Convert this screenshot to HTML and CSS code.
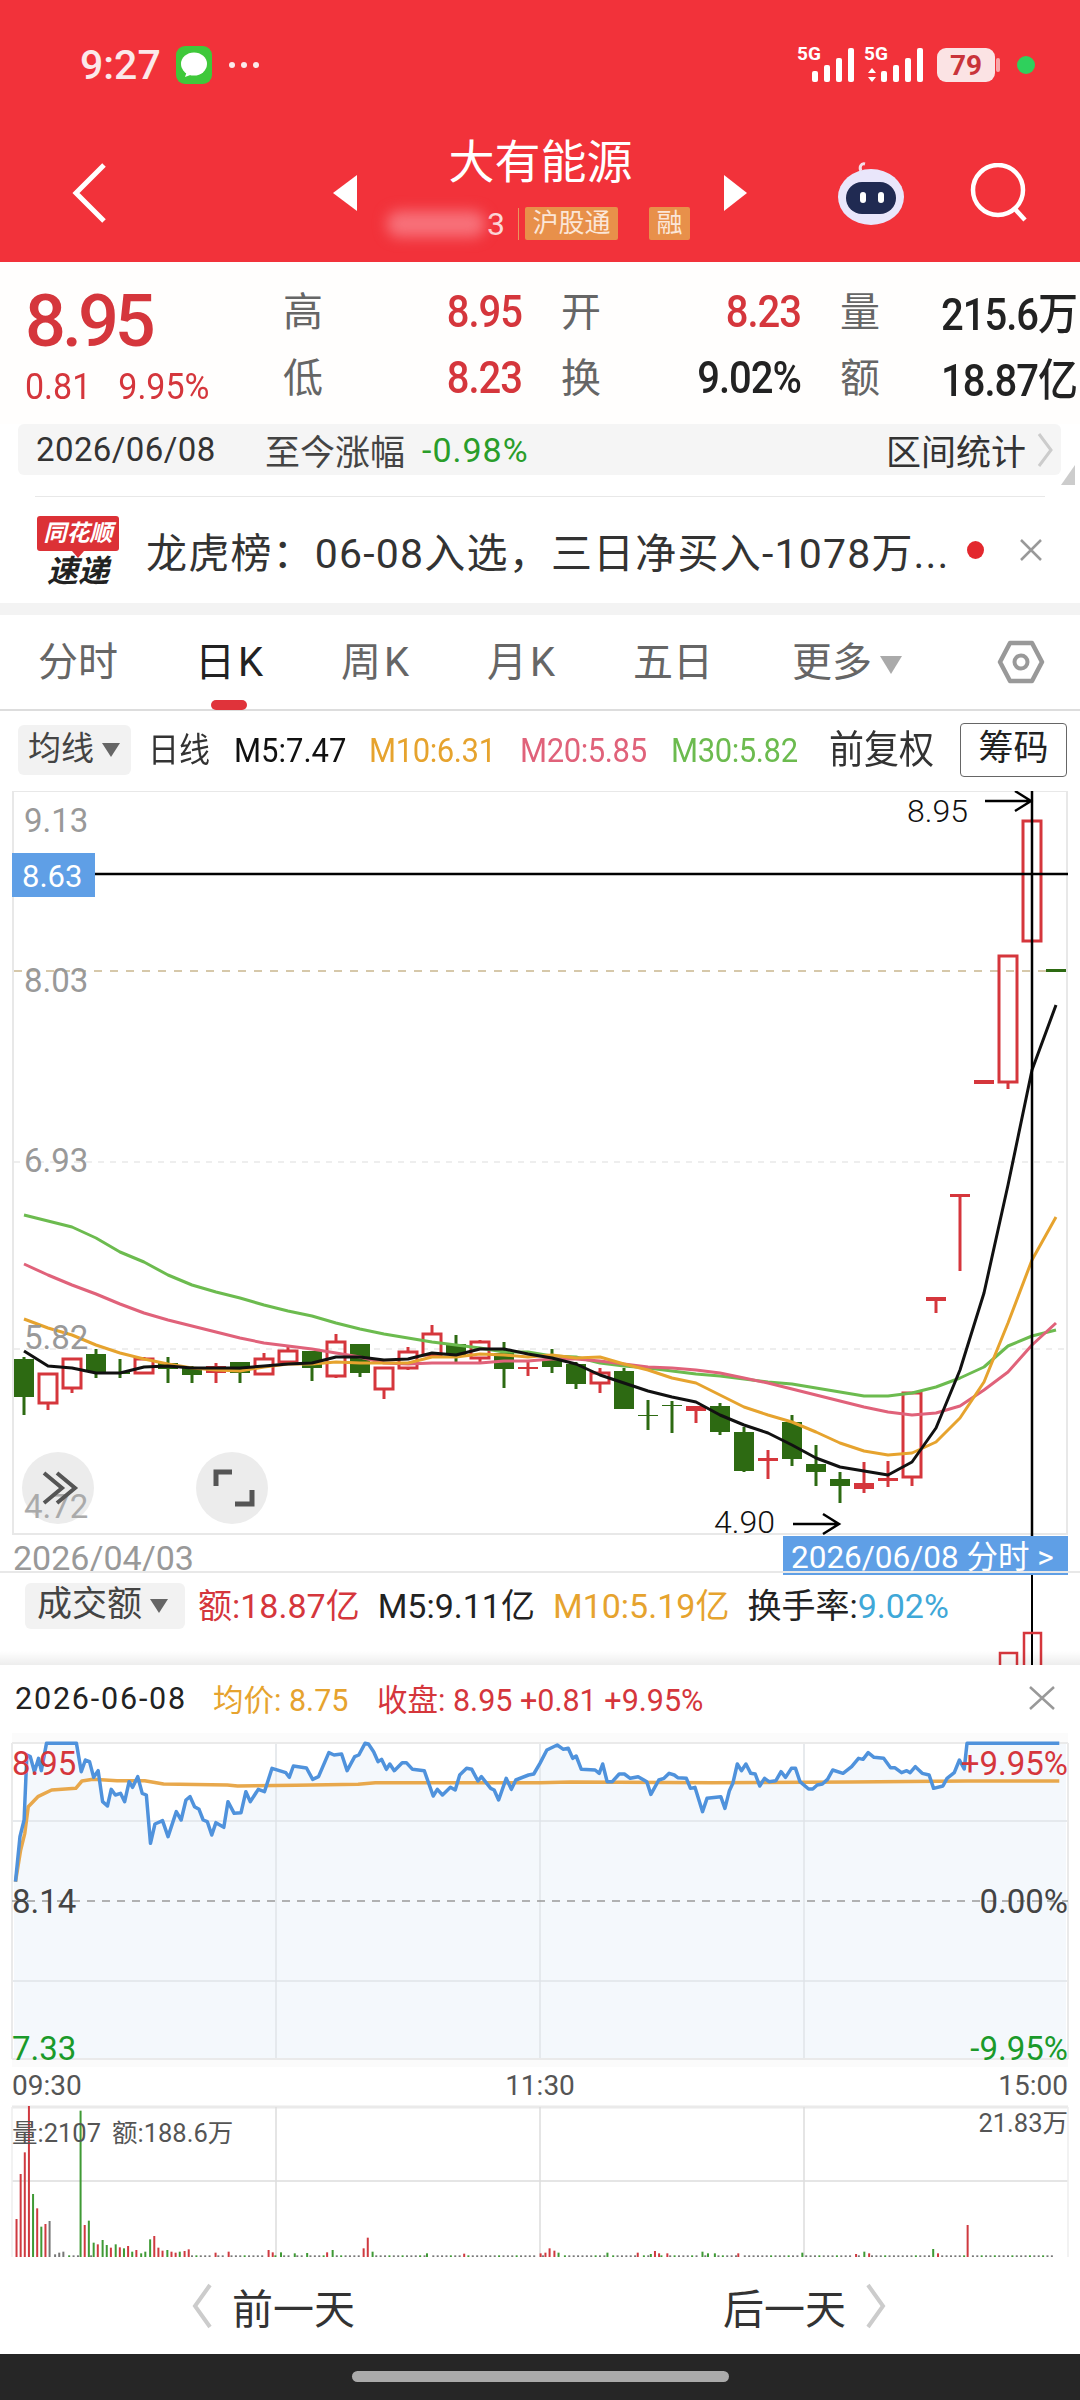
FILE: index.html
```html
<!DOCTYPE html>
<html lang="zh">
<head>
    <meta charset="utf-8">
    <title>大有能源</title>
    <link rel="stylesheet" href="styles.css">
</head>
<body>
<div class="page">
    <header class="topbar">
        <div class="status">
            <div class="status-left">
                <span class="clock">9:27</span>
                <svg class="msg-icon" width="36" height="38" viewBox="0 0 36 38">
                    <rect width="36" height="38" rx="9" fill="#3fc83a"/>
                    <ellipse cx="18" cy="18" rx="13" ry="11.5" fill="#fff"/>
                    <path d="M11 25 L9 31 L17 28 Z" fill="#fff"/>
                </svg>
                <span class="status-dots"><i></i><i></i><i></i></span>
            </div>
            <svg class="status-right" width="245" height="50" viewBox="795 40 245 50">
                <text class="net" x="797" y="60">5G</text>
                <g fill="#fff">
                    <rect x="812" y="71" width="6" height="11" rx="2"/>
                    <rect x="824" y="65" width="6" height="17" rx="2"/>
                    <rect x="836" y="58" width="6" height="24" rx="2"/>
                    <rect x="848" y="48" width="6" height="34" rx="2"/>
                </g>
                <text class="net" x="864" y="60">5G</text>
                <g fill="#fff">
                    <path d="M872 68 l4 5 h-8 z M872 82 l4 -5 h-8 z"/>
                    <rect x="881" y="71" width="6" height="11" rx="2"/>
                    <rect x="893" y="65" width="6" height="17" rx="2"/>
                    <rect x="905" y="58" width="6" height="24" rx="2"/>
                    <rect x="917" y="48" width="6" height="34" rx="2"/>
                </g>
                <rect x="937" y="48" width="58" height="34" rx="9" fill="#fbe3e4"/>
                <rect x="996" y="58" width="4" height="14" rx="2" fill="#f8a5a8"/>
                <text class="batt" x="966" y="75">79</text>
                <circle cx="1026" cy="65" r="9" fill="#2fd05c"/>
            </svg>
        </div>
        <nav class="navrow">
            <svg class="nav-back" width="36" height="62" viewBox="0 0 36 62">
                <path d="M32 3 L4 31 L32 59" fill="none" stroke="#fff" stroke-width="5"/>
            </svg>
            <div class="switcher">
                <span class="tri-left"></span>
                <div class="stock">
                    <div class="stock-name">大有能源</div>
                    <div class="stock-sub">
                        <span class="code-blur"></span>
                        <span class="code-end">3</span>
                        <span class="code-line"></span>
                        <span class="tag">沪股通</span>
                        <span class="tag tag-small">融</span>
                    </div>
                </div>
                <span class="tri-right"></span>
            </div>
            <div class="nav-tools">
                <svg width="68" height="64" viewBox="0 0 68 64">
                    <path d="M24 10 C22 6 24 2 28 3" fill="none" stroke="#f4dfe8" stroke-width="3"/>
                    <ellipse cx="34" cy="36" rx="33" ry="28" fill="#e9e6fb"/>
                    <rect x="9" y="21" width="50" height="32" rx="16" fill="#202a52"/>
                    <rect x="23" y="31" width="6" height="11" rx="3" fill="#fff"/>
                    <rect x="41" y="31" width="6" height="11" rx="3" fill="#fff"/>
                </svg>
                <svg width="58" height="60" viewBox="0 0 58 60">
                    <circle cx="28" cy="27" r="25" fill="none" stroke="#fff" stroke-width="4.5"/>
                    <path d="M44 45 L55 57" stroke="#fff" stroke-width="4.5"/>
                </svg>
            </div>
        </nav>
    </header>

    <section class="quote">
        <div class="price-box">
            <div class="price">8.95</div>
            <div class="change"><span>0.81</span><span>9.95%</span></div>
        </div>
        <div class="stats">
            <div class="stat"><span class="stat-key">高</span><span class="stat-val up">8.95</span></div>
            <div class="stat"><span class="stat-key">开</span><span class="stat-val up">8.23</span></div>
            <div class="stat"><span class="stat-key">量</span><span class="stat-val">215.6万</span></div>
            <div class="stat"><span class="stat-key">低</span><span class="stat-val up">8.23</span></div>
            <div class="stat"><span class="stat-key">换</span><span class="stat-val">9.02%</span></div>
            <div class="stat"><span class="stat-key">额</span><span class="stat-val">18.87亿</span></div>
        </div>
    </section>

    <div class="datebar">
        <span class="datebar-date">2026/06/08</span>
        <span class="datebar-label">至今涨幅</span>
        <span class="datebar-pct">-0.98%</span>
        <span class="datebar-link">区间统计</span>
        <svg width="16" height="34" viewBox="0 0 16 34">
            <path d="M2 1 L14 17 L2 33" fill="none" stroke="#ccc" stroke-width="3"/>
        </svg>
        <span class="datebar-fold"></span>
    </div>

    <div class="news">
        <div class="news-logo">
            <div class="logo-bubble">同花顺</div>
            <div class="logo-word">速递</div>
        </div>
        <div class="news-text">龙虎榜：06-08入选，三日净买入-1078万...</div>
        <span class="news-dot"></span>
        <svg class="news-close" width="24" height="22" viewBox="0 0 24 22">
            <path d="M2 1 L22 21 M22 1 L2 21" stroke="#999" stroke-width="2.5"/>
        </svg>
    </div>

    <div class="tabs">
        <span class="tab tab-a">分时</span>
        <span class="tab tab-b tab-k tab-active">日K</span>
        <span class="tab tab-c tab-k">周K</span>
        <span class="tab tab-d tab-k">月K</span>
        <span class="tab tab-e">五日</span>
        <span class="tab tab-f">更多<i class="tab-arrow"></i></span>
        <svg class="tab-hex" width="48" height="44" viewBox="0 0 48 44">
            <path d="M13 3 H35 L45 22 L35 41 H13 L3 22 Z" fill="none" stroke="#999" stroke-width="4.5" stroke-linejoin="round"/>
            <circle cx="24" cy="22" r="6.5" fill="none" stroke="#999" stroke-width="4"/>
        </svg>
    </div>

    <div class="marow">
        <span class="drop">均线<i class="drop-arrow"></i></span>
        <span class="ma ma-day">日线</span>
        <span class="ma ma5">M5:7.47</span>
        <span class="ma ma10">M10:6.31</span>
        <span class="ma ma20">M20:5.85</span>
        <span class="ma ma30">M30:5.82</span>
        <span class="ma ma-adj">前复权</span>
        <span class="chip">筹码</span>
    </div>

    <svg id="kline" class="kline" width="1080" height="792" viewBox="0 791 1080 792">
        <rect x="13" y="791" width="1054" height="743" fill="none" stroke="#e8e8e8" stroke-width="2"/>
        <path d="M14 971 H1066" stroke="#c9b68f" stroke-width="1.5" stroke-dasharray="8 8"/>
        <path d="M14 1162 H1066 M14 1349 H1066" stroke="#ddd" stroke-width="1" stroke-dasharray="6 6"/>
        <g id="kline-marks"></g>
        <path d="M1032 791 V1571" stroke="#000" stroke-width="2.5"/>
        <path d="M13 874 H1068" stroke="#000" stroke-width="2.5"/>
        <text class="axis" x="24" y="832">9.13</text>
        <text class="axis" x="24" y="992">8.03</text>
        <text class="axis" x="24" y="1172">6.93</text>
        <text class="axis" x="24" y="1349">5.82</text>
        <rect x="12" y="853" width="83" height="44" fill="#5f9fe6"/>
        <text class="axis-on" x="22" y="887">8.63</text>
        <text class="mark" x="907" y="822">8.95</text>
        <path d="M985 801 H1031 M1015 791 L1031 801 L1015 811" fill="none" stroke="#000" stroke-width="2.5"/>
        <text class="mark" x="714" y="1533">4.90</text>
        <path d="M793 1524 H839 M823 1514 L839 1524 L823 1534" fill="none" stroke="#000" stroke-width="2.5"/>
        <circle cx="58" cy="1488" r="36" fill="#ececec"/>
        <text class="axis axis-dim" x="24" y="1518">4.72</text>
        <path d="M44 1473 L62 1488 L44 1503 M57 1473 L75 1488 L57 1503" fill="none" stroke="#555" stroke-width="4"/>
        <circle cx="232" cy="1488" r="36" fill="#ececec"/>
        <path d="M216 1486 V1472 H232 M252 1490 V1504 H235" fill="none" stroke="#555" stroke-width="5"/>
        <text class="axis date-left" x="13" y="1570">2026/04/03</text>
        <rect x="783" y="1536" width="285" height="39" fill="#5f9fe6"/>
        <text class="date-on" x="791" y="1568">2026/06/08 分时 &gt;</text>
    </svg>

    <section class="volume">
        <svg class="volume-bars" width="1080" height="94" viewBox="0 1571 1080 94">
            <path d="M1032 1575 V1665" stroke="#000" stroke-width="2"/>
            <rect x="1000" y="1653" width="17" height="20" fill="none" stroke="#d5363c" stroke-width="2.5"/>
            <rect x="1024" y="1633" width="17" height="40" fill="none" stroke="#d5363c" stroke-width="2.5"/>
        </svg>
        <div class="volume-row">
            <span class="drop drop-wide">成交额<i class="drop-arrow"></i></span>
            <span class="vol-item up">额:18.87亿</span>
            <span class="vol-item">M5:9.11亿</span>
            <span class="vol-item vol-gold">M10:5.19亿</span>
            <span class="vol-item">换手率:<b class="vol-blue">9.02%</b></span>
        </div>
    </section>

    <section class="panel">
        <div class="panel-head">
            <span class="panel-date">2026-06-08</span>
            <span class="panel-avg">均价: 8.75</span>
            <span class="panel-close">收盘: 8.95 +0.81 +9.95%</span>
            <svg class="panel-x" width="28" height="24" viewBox="0 0 28 24">
                <path d="M2 1 L26 23 M26 1 L2 23" stroke="#999" stroke-width="2.5"/>
            </svg>
        </div>
        <svg id="intraday" class="intraday" width="1080" height="334" viewBox="0 1733 1080 334">
            <rect x="12" y="1733" width="1056" height="334" fill="#fbfbfb"/>
            <rect x="12" y="1743" width="1056" height="316" fill="#fff"/>
            <g id="intraday-fill"></g>
            <path d="M12 1821 H1068 M12 1981 H1068 M276 1743 V2059 M540 1743 V2059 M804 1743 V2059" stroke="#dfe3e8" stroke-width="1.5"/>
            <path d="M12 1743 H1068 M12 2059 H1068 M12 1743 V2059 M1068 1743 V2059" stroke="#eaeaea" stroke-width="2"/>
            <path d="M12 1901 H1068" stroke="#999" stroke-width="1.5" stroke-dasharray="8 7"/>
            <g id="intraday-lines"></g>
            <text class="axis up-fill" x="12" y="1775">8.95</text>
            <text class="axis dark-fill" x="12" y="1913">8.14</text>
            <text class="axis green-fill" x="12" y="2060">7.33</text>
            <text class="axis up-fill" x="1068" y="1775" text-anchor="end">+9.95%</text>
            <text class="axis dark-fill" x="1068" y="1913" text-anchor="end">0.00%</text>
            <text class="axis green-fill" x="1068" y="2060" text-anchor="end">-9.95%</text>
        </svg>
        <div class="times"><span>09:30</span><span>11:30</span><span>15:00</span></div>
        <svg id="ticks" class="ticks" width="1080" height="162" viewBox="0 2103 1080 162">
            <path d="M12 2107 H1068" stroke="#eaeaea" stroke-width="3"/>
            <path d="M12 2181 H1068 M276 2107 V2257 M540 2107 V2257 M804 2107 V2257" stroke="#ddd" stroke-width="1.5"/>
            <path d="M12 2107 V2257 M1068 2107 V2257" stroke="#eee" stroke-width="1.5"/>
            <g id="tick-bars"></g>
            <text class="tick-label" x="12" y="2142">量:2107</text>
            <text class="tick-label" x="112" y="2142">额:188.6万</text>
            <text class="tick-label" x="1068" y="2132" text-anchor="end">21.83万</text>
        </svg>
        <div class="daynav">
            <svg width="20" height="46" viewBox="0 0 20 46">
                <path d="M18 2 L3 23 L18 44" fill="none" stroke="#ccc" stroke-width="4"/>
            </svg>
            <span class="daynav-prev">前一天</span>
            <span class="daynav-next">后一天</span>
            <svg width="20" height="46" viewBox="0 0 20 46">
                <path d="M2 2 L17 23 L2 44" fill="none" stroke="#ccc" stroke-width="4"/>
            </svg>
        </div>
    </section>

    <div class="homebar"><span class="homebar-pill"></span></div>
</div>
<script src="charts.js"></script>
</body>
</html>
```
FILE: styles.css
```css
* {
    box-sizing: border-box;
}
body {
    margin: 0;
    background: #fff;
    font-family: Roboto, "Noto Sans CJK SC", sans-serif;
    color: #333;
}
svg {
    display: block;
}
.page {
    width: 1080px;
    height: 2400px;
    overflow: hidden;
}
.up {
    color: #d5363c;
}

/* top bar */
.topbar {
    height: 262px;
    background: #f2323a;
    color: #fff;
}
.status {
    height: 130px;
    padding: 0 40px 0 80px;
    display: flex;
    align-items: center;
    justify-content: space-between;
}
.status-left {
    display: flex;
    align-items: center;
}
.clock {
    font-size: 41px;
    font-weight: 500;
    width: 96px;
    color: #fbe9ea;
}
.status-dots {
    display: flex;
    gap: 6px;
    margin-left: 17px;
}
.status-dots i {
    width: 6px;
    height: 6px;
    border-radius: 50%;
    background: #fbe9ea;
}
.net {
    font-size: 19px;
    font-weight: 700;
    fill: #fff;
}
.batt {
    font-size: 28px;
    font-weight: 700;
    fill: #c9333a;
    text-anchor: middle;
}
.navrow {
    height: 132px;
    padding: 0 72px;
    display: grid;
    grid-template-columns: 1fr auto 1fr;
    align-items: center;
}
.nav-back {
    margin-top: -6px;
}
.switcher {
    display: flex;
    align-items: center;
    width: 415px;
    justify-content: space-between;
}
.tri-left,
.tri-right {
    width: 0;
    height: 0;
    border-top: 18px solid transparent;
    border-bottom: 18px solid transparent;
    margin-top: -6px;
}
.tri-left {
    border-right: 24px solid #fff;
}
.tri-right {
    border-left: 23px solid #fff;
}
.stock {
    display: flex;
    flex-direction: column;
    align-items: center;
    margin-top: -15px;
}
.stock-name {
    font-size: 46px;
    line-height: 60px;
    margin-top: -5px;
}
.stock-sub {
    display: flex;
    align-items: center;
    height: 33px;
    margin: 15px 4px 0 0;
}
.code-blur {
    width: 98px;
    height: 26px;
    background: #f7717a;
    border-radius: 12px;
    filter: blur(7px);
}
.code-end {
    font-size: 32px;
    margin-left: 2px;
    color: #fbd9db;
}
.code-line {
    width: 1px;
    height: 32px;
    background: #e9955c;
    margin: 0 6px 0 13px;
}
.tag {
    height: 33px;
    padding: 0 6px;
    background: #e8904a;
    color: #fbe6d8;
    font-size: 26px;
    line-height: 33px;
    border-radius: 2px;
    width: 93px;
    text-align: center;
    white-space: nowrap;
}
.tag-small {
    width: 41px;
    padding: 0;
    margin-left: 31px;
}
.nav-tools {
    display: flex;
    justify-content: flex-end;
    align-items: center;
    gap: 65px;
    margin: -6px -20px 0 0;
}

/* quote */
.quote {
    height: 162px;
    display: flex;
    background: #fffefd;
}
.price-box {
    width: 283px;
    padding: 18px 0 0 25px;
    color: #d5363c;
}
.price {
    font-size: 72px;
    font-weight: 500;
    line-height: 84px;
    letter-spacing: -4px;
}
.change {
    display: flex;
    gap: 27px;
    font-size: 34px;
    line-height: 44px;
    transform: scaleY(1.1);
}
.stats {
    padding-top: 16px;
    display: grid;
    grid-template-columns: 239px 240px 237px;
    grid-auto-rows: 66px;
    column-gap: 39px;
}
.stat {
    display: flex;
    justify-content: space-between;
    align-items: center;
    font-size: 40px;
    white-space: nowrap;
}
.stat-val {
    font-weight: 500;
    letter-spacing: -1px;
    color: #222;
    transform: scaleY(1.12);
}
.stat-val.up {
    color: #d5363c;
}
.stat-key {
    color: #666;
    margin-top: -4px;
}

/* date strip */
.datebar {
    position: relative;
    height: 51px;
    margin: 0 19px 0 18px;
    padding: 0 8px 0 18px;
    background: #f5f5f5;
    border-radius: 6px;
    display: flex;
    align-items: center;
}
.datebar-date {
    font-size: 33px;
    letter-spacing: .4px;
    width: 229px;
}
.datebar-label {
    font-size: 35px;
    color: #444;
    width: 157px;
    white-space: nowrap;
}
.datebar-pct {
    font-size: 34px;
    letter-spacing: 1px;
    color: #2a9d2a;
}
.datebar-link {
    font-size: 35px;
    margin-left: auto;
    margin-right: 11px;
}
.datebar-fold {
    position: absolute;
    right: -14px;
    bottom: -10px;
    border-left: 14px solid transparent;
    border-bottom: 20px solid #ccc;
}

/* news row */
.news {
    height: 119px;
    margin-top: 21px;
    position: relative;
    display: flex;
    align-items: center;
    padding-left: 37px;
    border-bottom: 12px solid #f3f3f3;
}
.news::before {
    content: "";
    position: absolute;
    top: 0;
    left: 35px;
    width: 1010px;
    height: 1px;
    background: #e8e8e8;
}
.news-logo {
    width: 109px;
    margin-top: 6px;
}
.logo-bubble {
    position: relative;
    width: 82px;
    height: 35px;
    background: #dc3136;
    color: #fff;
    border-radius: 3px;
    font-size: 23px;
    font-weight: 700;
    font-style: italic;
    line-height: 35px;
    text-align: center;
    white-space: nowrap;
}
.logo-bubble::after {
    content: "";
    position: absolute;
    left: 35px;
    top: 35px;
    border-left: 6px solid transparent;
    border-right: 6px solid transparent;
    border-top: 7px solid #dc3136;
}
.logo-word {
    width: 82px;
    margin-top: 4px;
    font-size: 31px;
    font-weight: 700;
    font-style: italic;
    line-height: 34px;
    text-align: center;
    color: #222;
}
.news-text {
    font-size: 41px;
    letter-spacing: 1.2px;
    white-space: nowrap;
    width: 821px;
    color: #333;
}
.news-dot {
    width: 17px;
    height: 18px;
    border-radius: 50%;
    background: #e3282e;
}
.news-close {
    margin-left: 35px;
}

/* tabs */
.tabs {
    position: relative;
    height: 96px;
    border-bottom: 2px solid #ddd;
    font-size: 40px;
    color: #666;
}
.tab {
    position: absolute;
    top: 20px;
    line-height: 56px;
    white-space: nowrap;
}
.tab-k {
    letter-spacing: 3px;
}
.tab-a { left: 38px; }
.tab-b { left: 195px; }
.tab-c { left: 341px; }
.tab-d { left: 487px; }
.tab-e { left: 633px; }
.tab-f { left: 792px; }
.tab-active {
    color: #222;
}
.tab-active::after {
    content: "";
    position: absolute;
    left: 16px;
    top: 65px;
    width: 36px;
    height: 10px;
    border-radius: 5px;
    background: #e0333a;
}
.tab-arrow {
    display: inline-block;
    margin-left: 8px;
    border-left: 11px solid transparent;
    border-right: 11px solid transparent;
    border-top: 18px solid #aaa;
    vertical-align: 2px;
}
.tab-hex {
    position: absolute;
    left: 997px;
    top: 25px;
}

/* moving averages */
.marow {
    position: relative;
    height: 80px;
    font-size: 31px;
}
.drop {
    position: absolute;
    left: 18px;
    top: 14px;
    width: 113px;
    height: 50px;
    padding-left: 10px;
    background: #f2f2f2;
    border-radius: 6px;
    line-height: 48px;
    font-size: 33px;
    white-space: nowrap;
    color: #444;
}
.drop-arrow {
    display: inline-block;
    margin-left: 8px;
    border-left: 9px solid transparent;
    border-right: 9px solid transparent;
    border-top: 14px solid #666;
    vertical-align: 3px;
}
.ma {
    position: absolute;
    top: 18px;
    line-height: 44px;
    white-space: nowrap;
    transform: scaleY(1.1);
}
.ma-day { left: 148px; color: #333; }
.ma5 { left: 234px; color: #111; }
.ma10 { left: 369px; color: #e6a32e; letter-spacing: -.4px; }
.ma20 { left: 520px; color: #e0627a; letter-spacing: -.4px; }
.ma30 { left: 671px; color: #6cbb4f; letter-spacing: -.4px; }
.ma-adj { left: 829px; font-size: 35px; color: #333; }
.chip {
    position: absolute;
    left: 960px;
    top: 12px;
    width: 107px;
    height: 54px;
    border: 1.5px solid #666;
    border-radius: 4px;
    text-align: center;
    line-height: 50px;
    font-size: 35px;
    color: #222;
}

/* k line */
.axis {
    font-size: 33px;
    fill: #999;
}
.axis-dim {
    fill: #aaa;
}
.axis-on {
    font-size: 31px;
    fill: #fff;
}
.mark {
    font-size: 32px;
    font-weight: 300;
    fill: #111;
}
.date-left {
    font-size: 34px;
}
.date-on {
    font-size: 31.5px;
    fill: #fff;
}

/* volume strip */
.volume {
    position: relative;
    height: 94px;
    margin-top: -12px;
    border-top: 2px solid #e8e8e8;
}
.volume::after {
    content: "";
    position: absolute;
    left: 0;
    right: 0;
    bottom: 0;
    height: 14px;
    background: linear-gradient(rgba(0, 0, 0, 0), rgba(0, 0, 0, .07));
}
.volume-bars {
    position: absolute;
    top: -2px;
    left: 0;
}
.volume-row {
    position: relative;
    display: flex;
    align-items: center;
    padding: 10px 0 0 198px;
    gap: 18px;
    font-size: 34px;
    white-space: nowrap;
}
.drop-wide {
    top: 10px;
    left: 25px;
    width: 160px;
    height: 46px;
    font-size: 35px;
    line-height: 44px;
    padding-left: 12px;
}
.vol-item {
    line-height: 46px;
    color: #222;
}
.vol-item.up {
    color: #d5363c;
}
.vol-gold {
    color: #e6a32e;
}
.vol-blue {
    font-weight: 400;
    color: #3fa8d8;
}

/* intraday panel */
.panel {
    position: relative;
    background: #fff;
}
.panel-head {
    height: 68px;
    display: flex;
    align-items: center;
    padding: 0 24px 2px 15px;
    font-size: 30.5px;
    white-space: nowrap;
}
.panel-date {
    width: 198px;
    letter-spacing: 1.8px;
    color: #222;
}
.panel-avg {
    width: 164px;
    color: #e6a32e;
}
.panel-close {
    color: #d5363c;
}
.panel-x {
    margin-left: auto;
}
.up-fill {
    fill: #d5363c;
}
.dark-fill {
    fill: #444;
}
.green-fill {
    fill: #1a9a2a;
}
.times {
    height: 36px;
    padding: 0 12px;
    display: flex;
    justify-content: space-between;
    align-items: center;
    font-size: 28px;
    color: #555;
}
.tick-label {
    font-size: 25.5px;
    fill: #555;
}
.daynav {
    height: 89px;
    padding: 0 194px 8px 192px;
    display: flex;
    align-items: center;
    font-size: 41px;
    color: #333;
}
.daynav-prev {
    margin-left: 20px;
}
.daynav-next {
    margin-left: auto;
    margin-right: 20px;
}
.homebar {
    height: 46px;
    background: #262626;
    display: flex;
    justify-content: center;
    padding-top: 17px;
}
.homebar-pill {
    width: 377px;
    height: 11px;
    border-radius: 6px;
    background: #aaa;
}
```
FILE: charts.js
```js
const SVG_NS = "http://www.w3.org/2000/svg";
const RED = "#d5363c";
const GREEN = "#2d6a12";

function add(parent, tag, attrs) {
    const node = document.createElementNS(SVG_NS, tag);
    for (const key in attrs) node.setAttribute(key, attrs[key]);
    parent.appendChild(node);
    return node;
}

function line(parent, points, color, width) {
    add(parent, "polyline", {
        points: points.map(p => p.join(",")).join(" "),
        fill: "none",
        stroke: color,
        "stroke-width": width,
        "stroke-linejoin": "round"
    });
}

// one candle every 24px: [kind, body top, body bottom, wick top, wick bottom]
// r = hollow red, R = solid red, g = solid green
const candles = [
    ["g", 1359, 1397, 1357, 1415], ["r", 1374, 1403, 1374, 1410], ["r", 1359, 1388, 1359, 1393],
    ["g", 1354, 1372, 1349, 1378], ["g", 1372, 1374, 1359, 1378], ["r", 1359, 1373, 1357, 1373],
    ["g", 1363, 1369, 1357, 1383], ["g", 1368, 1375, 1366, 1383], ["R", 1366, 1373, 1363, 1383],
    ["g", 1362, 1373, 1362, 1383], ["r", 1359, 1374, 1353, 1375], ["r", 1351, 1362, 1347, 1362],
    ["g", 1351, 1368, 1351, 1381], ["r", 1342, 1376, 1334, 1378], ["g", 1344, 1373, 1344, 1377],
    ["r", 1368, 1389, 1368, 1399], ["r", 1352, 1368, 1347, 1370], ["r", 1334, 1355, 1325, 1358],
    ["g", 1344, 1355, 1335, 1362], ["r", 1342, 1358, 1340, 1363], ["g", 1353, 1369, 1342, 1388],
    ["R", 1367, 1369, 1362, 1376], ["g", 1359, 1367, 1349, 1373], ["g", 1364, 1384, 1362, 1389],
    ["r", 1373, 1383, 1368, 1393], ["g", 1371, 1409, 1368, 1409], ["g", 1415, 1416, 1400, 1430],
    ["g", 1405, 1406, 1401, 1433], ["R", 1406, 1411, 1406, 1423], ["g", 1406, 1432, 1403, 1435],
    ["g", 1432, 1471, 1427, 1472], ["R", 1458, 1461, 1450, 1479], ["g", 1422, 1459, 1415, 1466],
    ["g", 1464, 1472, 1445, 1486], ["g", 1479, 1486, 1472, 1503], ["R", 1483, 1489, 1462, 1493],
    ["R", 1478, 1481, 1461, 1487], ["r", 1393, 1477, 1393, 1486], ["R", 1297, 1301, 1297, 1313],
    ["R", 1194, 1197, 1194, 1271], ["R", 1080, 1084, 1080, 1084], ["r", 956, 1082, 956, 1089],
    ["r", 821, 941, 821, 941], ["g", 969, 972, 969, 972]
];

const marks = document.getElementById("kline-marks");
candles.forEach(([kind, top, bottom, wickTop, wickBottom], i) => {
    const x = 24 + 24 * i;
    const color = kind === "g" ? GREEN : RED;
    if (wickTop < top) add(marks, "line", { x1: x, x2: x, y1: wickTop, y2: top, stroke: color, "stroke-width": 3 });
    if (wickBottom > bottom) add(marks, "line", { x1: x, x2: x, y1: bottom, y2: wickBottom, stroke: color, "stroke-width": 3 });
    if (kind === "r") {
        add(marks, "rect", { x: x - 9, y: top, width: 18, height: bottom - top, fill: "none", stroke: color, "stroke-width": 3 });
    } else {
        add(marks, "rect", { x: x - 10, y: top, width: 20, height: bottom - top, fill: color });
    }
});

const m5 = [1351,1366,1368,1373,1373,1367,1366,1368,1368,1368,1366,1364,1363,1357,1357,1360,1359,1353,1355,1349,1349,1354,1358,1364,1375,1383,1391,1397,1402,1415,1425,1433,1445,1458,1467,1471,1475,1462,1428,1370,1293,1185,1070,1005];
const m10 = [1319,1328,1335,1345,1353,1359,1364,1368,1370,1371,1367,1364,1364,1362,1363,1363,1363,1357,1357,1354,1355,1357,1355,1358,1357,1364,1370,1378,1383,1395,1407,1415,1422,1432,1443,1451,1455,1453,1442,1418,1382,1323,1260,1217];
const m20 = [1264,1275,1285,1294,1304,1313,1320,1326,1332,1338,1343,1346,1349,1353,1357,1363,1364,1363,1363,1363,1361,1361,1359,1359,1361,1364,1367,1368,1370,1373,1378,1383,1389,1395,1401,1407,1412,1415,1413,1406,1390,1372,1345,1323];
const m30 = [1215,1221,1227,1238,1252,1262,1275,1285,1292,1298,1305,1311,1316,1323,1329,1334,1338,1342,1345,1348,1352,1352,1356,1357,1363,1366,1368,1371,1374,1376,1379,1382,1384,1388,1392,1396,1396,1393,1387,1378,1367,1346,1336,1330];
[[m30, "#6cbb4f"], [m20, "#e0627a"], [m10, "#e6a32e"], [m5, "#111"]].forEach(([values, color]) => {
    line(marks, values.map((y, i) => [24 + 24 * i, y]), color, 3);
});

// intraday points traced at x * 2.904, y * 3 from y = 1700
const morning = [[45,545],[58,410],[70,360],[78,165],[88,170],[100,215],[112,175],[120,212],[135,130],[222,130],[236,215],[248,180],[260,185],[272,232],[285,212],[298,305],[312,318],[323,268],[335,285],[350,280],[362,305],[375,245],[385,262],[400,230],[413,280],[425,285],[437,430],[450,372],[472,362],[488,410],[512,335],[526,360],[540,300],[552,290],[565,320],[578,328],[590,360],[602,365],[615,405],[627,368],[650,382],[662,305],[680,340],[700,338],[714,275],[727,305],[750,268],[768,275],[790,205],[830,218],[840,232],[852,198],[890,204],[908,238],[925,230],[955,158],[970,165],[992,162],[1008,212],[1030,170],[1042,165],[1060,130],[1070,132],[1085,155],[1098,185],[1108,178],[1122,208],[1132,192],[1145,212],[1168,188],[1180,188],[1198,208],[1232,212],[1258,288],[1270,268],[1285,285],[1308,262],[1322,270],[1335,225],[1355,205],[1370,208],[1388,243],[1398,230],[1425,265],[1435,270],[1448,300],[1470,235],[1485,268],[1498,240],[1535,225],[1550,222],[1568,190]];
const afternoon = [[20,150],[50,135],[68,148],[82,145],[95,175],[105,168],[120,208],[160,210],[172,220],[182,192],[195,245],[210,245],[230,222],[245,222],[262,235],[285,230],[310,245],[322,283],[345,240],[360,235],[375,220],[390,225],[400,233],[425,235],[437,265],[450,262],[472,335],[485,295],[525,290],[537,325],[550,272],[560,250],[573,192],[585,212],[598,192],[612,220],[625,222],[638,258],[652,235],[665,245],[685,242],[700,215],[713,232],[730,205],[742,205],[755,245],[780,267],[792,267],[805,255],[820,252],[835,238],[850,210],[880,220],[905,200],[925,175],[938,178],[953,158],[970,172],[998,175],[1018,203],[1030,203],[1050,218],[1065,212],[1075,218],[1090,200],[1110,220],[1130,225],[1143,265],[1170,258],[1182,235],[1203,218],[1218,180],[1232,207],[1240,130],[1508,130]];
const avgMorning = [[45,545],[60,450],[72,400],[82,320],[110,290],[150,270],[220,265],[238,243],[270,238],[340,242],[420,242],[475,252],[660,255],[690,258],[860,256],[1040,253],[1090,248],[1568,248]];
const avgAfternoon = [[90,246],[500,248],[900,246],[1240,243],[1508,243]];

function traced(points, xStart) {
    return points.map(([x, y]) => [xStart + x / 2.904, 1700 + y / 3]);
}
const price = traced(morning, 0).concat(traced(afternoon, 540));
const avg = traced(avgMorning, 0).concat(traced(avgAfternoon, 540));

const fill = price.concat([[1060, 1743], [1066, 1743], [1066, 2059], [14, 2059], [14, 1880]]);
add(document.getElementById("intraday-fill"), "polygon", {
    points: fill.map(p => p.join(",")).join(" "),
    fill: "#f4f8fc"
});
const dayLines = document.getElementById("intraday-lines");
line(dayLines, avg, "#e8a84c", 3.5);
line(dayLines, price, "#4f92dc", 3.5);

// volume ticks: [x in the traced crop (x * 1.452), top (y * 3 from 2060), colour]
const C = { r: "#cf3a40", g: "#3f9a35", k: "#777" };
const big = [[24,477,"r"],[30,342,"r"],[36,277,"r"],[42,138,"r"],[48,402,"g"],[54,445,"r"],[60,500,"g"],[66,492,"r"],[72,483,"k"],[80,583,"k"],[86,578,"k"],[92,575,"k"],[117,152,"g"],[123,495,"r"],[129,482,"g"],[136,548,"g"],[142,553,"r"],[149,540,"g"],[155,555,"g"],[161,563,"r"],[168,553,"g"],[174,562,"r"],[180,565,"g"],[186,558,"r"],[192,575,"g"],[198,570,"r"],[205,580,"g"],[211,575,"g"],[218,538,"g"],[224,528,"r"],[230,563,"r"],[236,572,"r"],[243,570,"g"],[249,575,"r"],[255,578,"r"],[261,575,"g"],[268,573,"r"],[274,568,"r"],[313,578,"r"],[332,575,"r"],[390,570,"r"],[396,577,"r"],[408,577,"g"],[428,580,"g"],[446,579,"g"],[475,577,"r"],[483,570,"g"],[528,565,"r"],[534,533,"r"],[541,575,"g"],[620,580,"g"],[674,581,"r"],[785,580,"r"],[792,578,"r"],[798,565,"r"],[805,572,"r"],[811,578,"g"],[882,578,"g"],[926,578,"r"],[945,582,"g"],[951,573,"r"],[957,580,"r"],[969,580,"r"],[1020,575,"g"],[1028,580,"g"],[1038,580,"g"],[1072,580,"r"],[1165,578,"g"],[1243,582,"r"],[1255,575,"g"],[1262,580,"r"],[1355,567,"g"],[1362,580,"r"],[1405,495,"r"]];
const bars = document.getElementById("tick-bars");
const taken = big.map(b => b[0]);
for (let x = 24; x < 1530; x += 6.37) {
    if (taken.some(t => Math.abs(t - x) < 3.2)) continue;
    big.push([x, 586, Math.round(x) % 5 === 0 ? "g" : "k"]);
}
big.forEach(([x, top, color]) => {
    add(bars, "rect", {
        x: x / 1.452 - 1,
        y: 2060 + top / 3,
        width: 2,
        height: 2257 - (2060 + top / 3),
        fill: C[color]
    });
});
```
